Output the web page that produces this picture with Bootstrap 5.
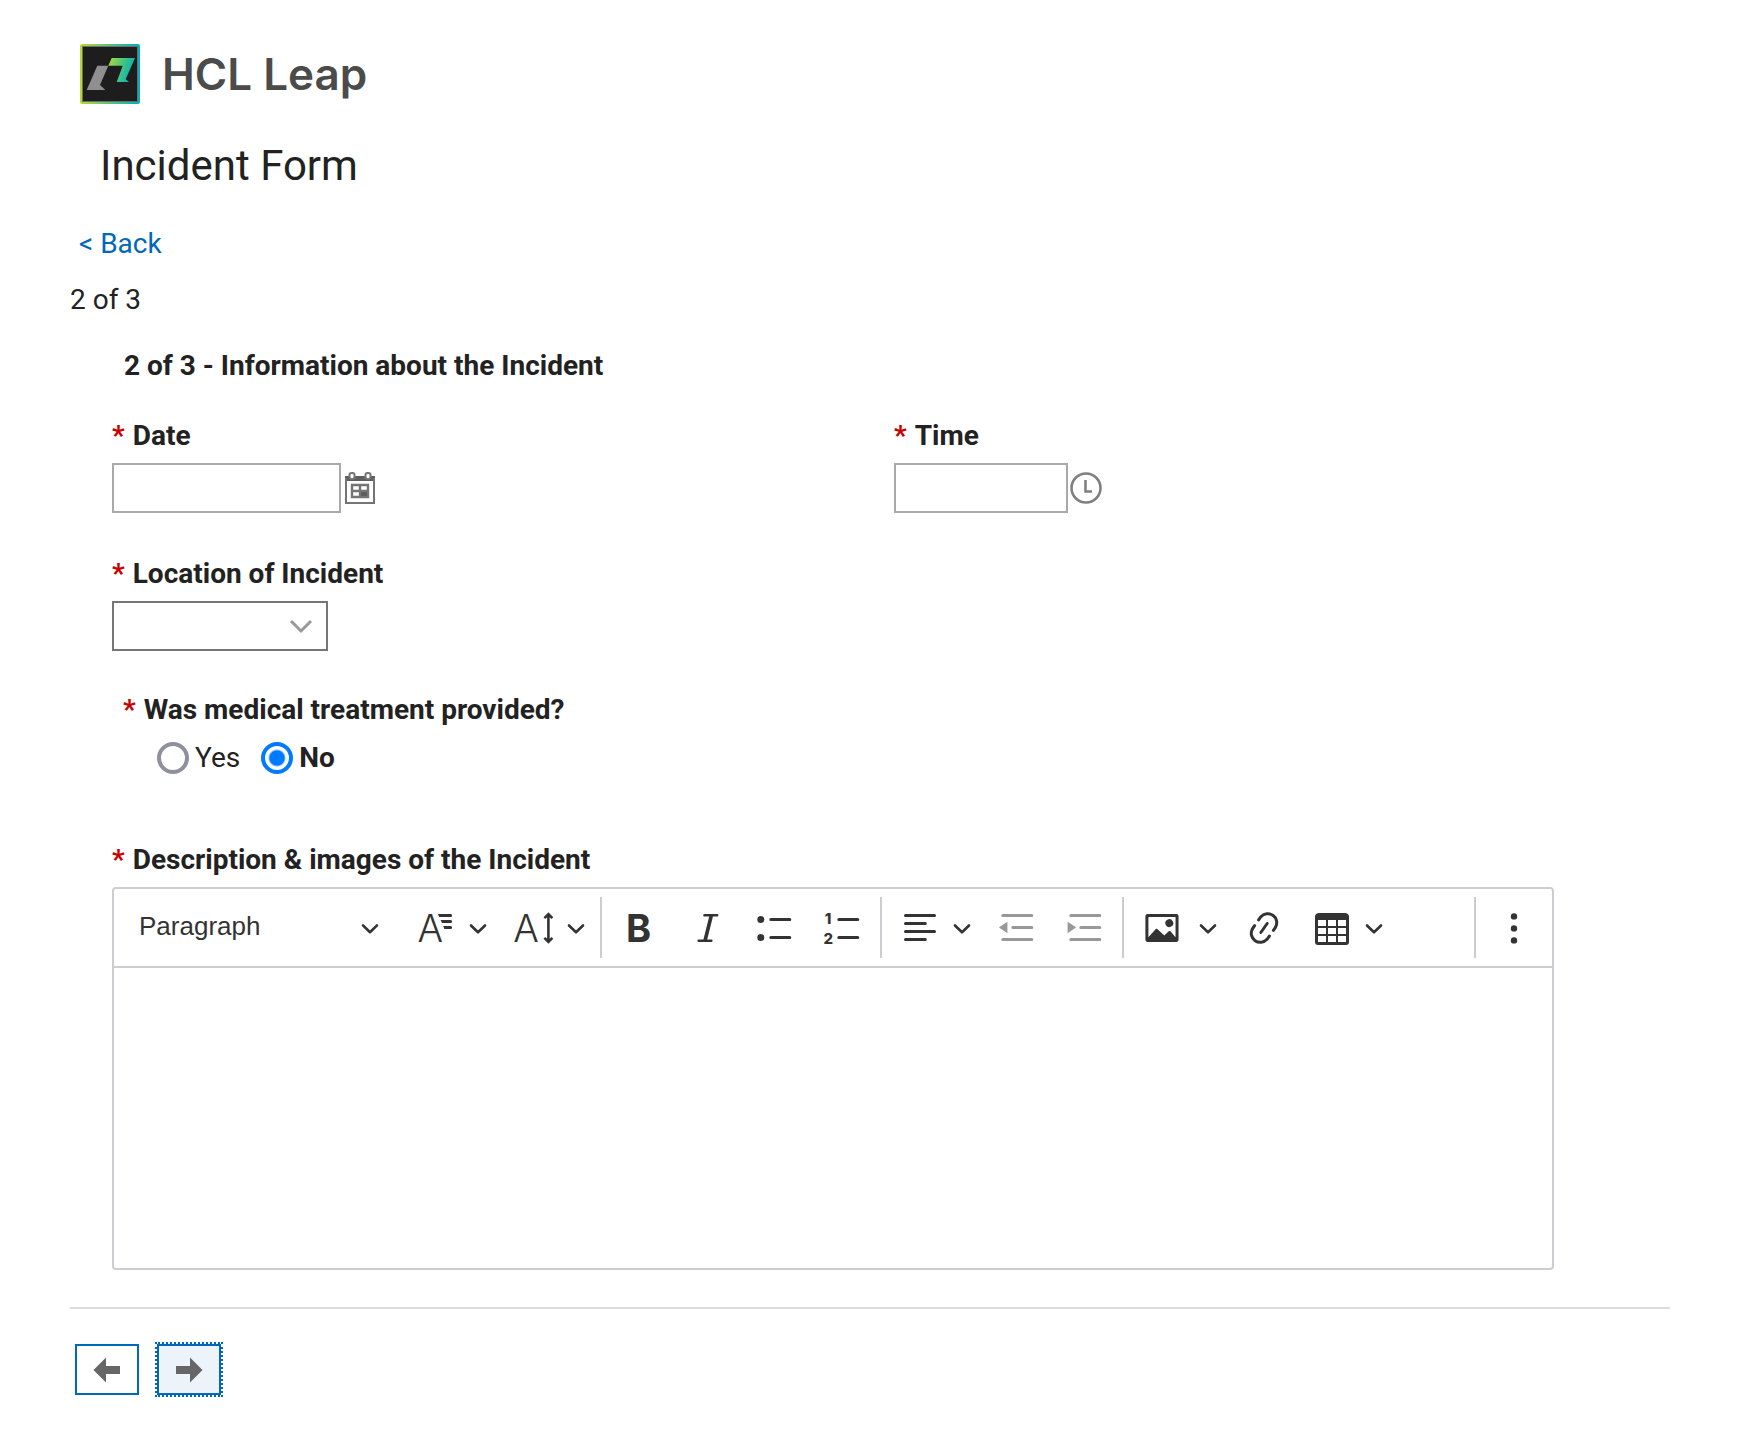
<!DOCTYPE html>
<html lang="en">
<head>
<meta charset="utf-8">
<meta name="viewport" content="width=device-width, initial-scale=1">
<title>Incident Form</title>
<link href="https://cdn.jsdelivr.net/npm/bootstrap@5.3.0/dist/css/bootstrap.min.css" rel="stylesheet">
<style>
  body { font-family: Roboto, sans-serif; font-size: 28px; line-height: 32px; color: #222; background: #fff; }
  .page { padding: 44px 68px 48px 70px; }
  .brand { padding-left: 10px; gap: 22px; }
  .brand-name { font-family: Inter, sans-serif; font-size: 44px; line-height: 60px; font-weight: 600; color: #4b4b4b; }
  .form-title { font-size: 42px; line-height: 48px; font-weight: 400; margin: 38px 0 38px 30px; }
  .back-link { color: #0068b8; padding-left: 9px; }
  .page-count { margin-top: 24px; }
  .section-title { font-size: 28px; line-height: 32px; font-weight: 700; margin: 34px 0 38px 12px; }
  .fields { padding-left: 42px; }
  .field-label { display: block; font-size: 28px; line-height: 32px; font-weight: 700; margin: 0 0 11px; padding: 0; float: none; width: auto; }
  .req { color: #c80000; margin-right: 8px; }
  .form-control, .form-select { border: 2px solid #a9a9a9; border-radius: 0; font-size: 28px; height: 50px; padding: 0 12px; }
  .date-box { width: 229px; }
  .time-box { width: 174px; }
  .location-box { width: 216px; border-color: #767676; background-position: right 12px center; background-size: 26px 26px;
    background-image: url("data:image/svg+xml,%3Csvg xmlns='http://www.w3.org/2000/svg' viewBox='0 0 26 26'%3E%3Cpath d='M3 8l10 10L23 8' fill='none' stroke='%23999' stroke-width='3'/%3E%3C/svg%3E"); }
  .icon-btn { border: 0; background: none; padding: 0; line-height: 0; }
  .time-picker { gap: 2px; }
  .second-row { margin-top: 45px; }
  .medical { margin: 43px 0 70px 11px; }
  .medical .field-label { margin-bottom: 16px; }
  .choices { gap: 21px; padding-left: 34px; }
  .choice { display: flex; align-items: center; gap: 6px; }
  .choice input { appearance: none; width: 32px; height: 32px; margin: 0; border: 4px solid #8f8f9d; border-radius: 50%; background: #fff; }
  .choice input:checked { border-color: #007bff; background: radial-gradient(circle, #007bff 7px, #fff 9px); }
  .choice input:checked + label { font-weight: 700; }
  .editor { margin-right: 122px; border: 2px solid #ccccd1; border-radius: 4px; }
  .tools { height: 79px; padding: 0 4px 0 8px; border-bottom: 2px solid #ccccd1; }
  .tool { border: 0; background: none; color: #333; padding: 0 14px; height: 64px; display: flex; align-items: center; flex: none; }
  .tool:disabled { opacity: .5; }
  .tool.drops { gap: 12px; padding-right: 12px; }
  .tool.drops.picture { gap: 16px; }
  .ico { width: 40px; height: 40px; fill: currentColor; display: block; overflow: visible; }
  .ico text { font-family: Inter, sans-serif; }
  .chev { width: 20px; height: 20px; fill: none; stroke: currentColor; stroke-width: 2; stroke-linecap: round; stroke-linejoin: round; }
  .para-select { appearance: none; border: 0; width: 280px; height: 64px; flex: none; padding: 0 60px 4px 17px; color: #333;
    font-family: "Liberation Sans", Arial, sans-serif; font-size: 26px; line-height: 32px;
    background: url("data:image/svg+xml,%3Csvg xmlns='http://www.w3.org/2000/svg' viewBox='0 0 10 10'%3E%3Cpath d='M1.5 3.7L5 7.1l3.500-3.400' fill='none' stroke='%23333' stroke-width='1.300' stroke-linecap='round' stroke-linejoin='round'/%3E%3C/svg%3E") right 22px center / 20px 20px no-repeat; }
  .divide { width: 2px; height: 61px; background: #ccccd1; margin: 0 4px 0 2px; flex: none; }
  .editor-area { display: block; width: 100%; height: 300px; border: 0; outline: 0; resize: none; padding: 16px; border-radius: 4px; }
  .page-rule { border: 0; border-top: 2px solid #dcdcde; opacity: 1; margin: 37px 6px 35px 0; }
  .pager { gap: 18px; padding-left: 5px; }
  .page-btn { width: 64px; height: 51px; border: 2px solid #0068b8; border-radius: 0; background: #fff; padding: 0; display: flex; align-items: center; justify-content: center; }
  .page-btn.current { background: #ecf3fb; outline: 2px dotted #0068b8; }
</style>
</head>
<body>
<svg class="d-none" aria-hidden="true">
  <symbol id="chev" viewBox="0 0 20 20"><path d="M3 7.500l7 6.800 7-6.800" stroke-width="2.600"/></symbol>
</svg>
<main class="page">
  <header class="brand d-flex align-items-center">
    <svg width="60" height="60" viewBox="0 0 60 60" aria-hidden="true">
      <defs>
        <linearGradient id="edge"><stop offset="0" stop-color="#bfd730"/><stop offset=".5" stop-color="#5cc080"/><stop offset="1" stop-color="#00adc0"/></linearGradient>
        <linearGradient id="leaf" x1="0" y1="0" x2="1" y2=".3"><stop offset="0" stop-color="#b4d936"/><stop offset=".5" stop-color="#4fc878"/><stop offset="1" stop-color="#08b0b8"/></linearGradient>
      </defs>
      <rect width="60" height="60" rx="2" fill="url(#edge)"/>
      <rect x="2.500" y="2.500" width="55" height="55" fill="#1d1d1d" stroke="#66706c" stroke-width="1"/>
      <path d="M17.300 21.700h11L20 41l5.300 5H6.700z" fill="#8f8f8f"/>
      <path d="M31.700 14H55l-9.300 21.300L49 38H36.700l6-16.300H28.300z" fill="url(#leaf)"/>
    </svg>
    <span class="brand-name">HCL Leap</span>
  </header>

  <h1 class="form-title">Incident Form</h1>
  <nav><a class="back-link d-block text-decoration-none" href="#">&lt; Back</a></nav>
  <div class="page-count">2 of 3</div>

  <form class="m-0" onsubmit="return false">
    <div class="fields">
      <h2 class="section-title">2 of 3 - Information about the Incident</h2>

      <div class="row gx-0">
        <div class="col-6">
          <label class="field-label" for="date"><span class="req">*</span>Date</label>
          <div class="d-flex align-items-center gap-1">
            <input class="form-control date-box" id="date" type="text">
            <button class="icon-btn" type="button" aria-label="Choose date">
              <svg width="30" height="32" viewBox="0 0 30 32" fill="none" stroke="#757575" stroke-width="2">
                <path d="M0 4h30v5H0z" fill="#5f5f5f" stroke="none"/>
                <path d="M1 6v25h28V6"/>
                <rect x="4.500" y="1" width="5" height="6" rx="2" fill="#fff"/>
                <rect x="20.500" y="1" width="5" height="6" rx="2" fill="#fff"/>
                <path d="M7 13h16v12H7zM15 13v12M7 19h16" stroke-width="2.400"/>
                <path d="M15 19h8v6h-8z" fill="#5f5f5f"/>
              </svg>
            </button>
          </div>
        </div>
        <div class="col-6">
          <label class="field-label" for="time"><span class="req">*</span>Time</label>
          <div class="time-picker d-flex align-items-center">
            <input class="form-control time-box" id="time" type="text">
            <button class="icon-btn" type="button" aria-label="Choose time">
              <svg width="32" height="32" viewBox="0 0 32 32" fill="none" stroke="#808080" stroke-width="2.600">
                <circle cx="16" cy="16" r="14.500"/><path d="M15.500 8v11.500H22"/>
              </svg>
            </button>
          </div>
        </div>
      </div>

      <div class="second-row">
        <label class="field-label" for="location"><span class="req">*</span>Location of Incident</label>
        <select class="form-select location-box" id="location"><option selected></option></select>
      </div>

      <fieldset class="medical">
        <legend class="field-label"><span class="req">*</span>Was medical treatment provided?</legend>
        <div class="choices d-flex">
          <div class="choice"><input type="radio" name="medical" id="medYes"><label for="medYes">Yes</label></div>
          <div class="choice"><input type="radio" name="medical" id="medNo" checked><label for="medNo">No</label></div>
        </div>
      </fieldset>

      <label class="field-label" for="description"><span class="req">*</span>Description &amp; images of the Incident</label>
      <div class="editor">
        <div class="tools d-flex align-items-center" role="toolbar" aria-label="Editor toolbar">
          <select class="para-select" aria-label="Heading"><option>Paragraph</option></select>
          <button class="tool drops" type="button" aria-label="Font family">
            <svg class="ico" viewBox="0 0 20 20"><text x="0.700" y="17" font-weight="300" font-size="19">A</text><path d="M11 3h6.300a.75.75 0 0 1 0 1.500h-5.700zM12.300 6h5a.75.75 0 0 1 0 1.500H13zM13.600 9h3.700a.75.75 0 0 1 0 1.500h-3.100z"/></svg>
            <svg class="chev"><use href="#chev"/></svg>
          </button>
          <button class="tool drops" type="button" aria-label="Font size">
            <svg class="ico" viewBox="0 0 20 20"><text x="-0.400" y="17" font-weight="300" font-size="19">A</text><path d="M17.200 3.500v13M15.200 5.100l2-2 2 2M15.200 14.900l2 2 2-2" fill="none" stroke="currentColor" stroke-width="1.300"/></svg>
            <svg class="chev"><use href="#chev"/></svg>
          </button>
          <span class="divide"></span>
          <button class="tool" type="button" aria-label="Bold">
            <svg class="ico" viewBox="0 0 20 20"><text x="3" y="17" font-weight="700" font-size="19">B</text></svg>
          </button>
          <button class="tool" type="button" aria-label="Italic">
            <svg class="ico" viewBox="0 0 20 20" fill="none"><path d="M8.200 3.600h6.400M5.300 16.400h6.400" stroke="currentColor" stroke-width="1.200" stroke-linecap="round"/><path d="M11.700 3.600L8.500 16.400" stroke="currentColor" stroke-width="1.800"/></svg>
          </button>
          <button class="tool" type="button" aria-label="Bulleted list">
            <svg class="ico" viewBox="0 0 20 20"><circle cx="2.400" cy="5.750" r="1.750"/><circle cx="2.400" cy="14.750" r="1.750"/><path d="M7.400 5.750h9.500M7.400 14.750h9.500" stroke="currentColor" stroke-width="1.500" stroke-linecap="round"/></svg>
          </button>
          <button class="tool" type="button" aria-label="Numbered list">
            <svg class="ico" viewBox="0 0 20 20"><text x="0.400" y="8" font-weight="800" font-size="7.500">1</text><text x="-0.200" y="18" font-weight="800" font-size="7.500">2</text><path d="M7.400 5.750h9.500M7.400 14.750h9.500" stroke="currentColor" stroke-width="1.500" stroke-linecap="round"/></svg>
          </button>
          <span class="divide"></span>
          <button class="tool drops" type="button" aria-label="Text alignment">
            <svg class="ico" viewBox="0 0 20 20"><path d="M2.750 3.750h14.500M2.750 7.750h9.900M2.750 11.750h14.500M2.750 15.750h9.900" stroke="currentColor" stroke-width="1.500" stroke-linecap="round"/></svg>
            <svg class="chev"><use href="#chev"/></svg>
          </button>
          <button class="tool" type="button" aria-label="Decrease indent" disabled>
            <svg class="ico" viewBox="0 0 20 20"><path d="M2.400 3.750h14.500M7.400 9.750h9.500M2.400 15.750h14.500" stroke="currentColor" stroke-width="1.500" stroke-linecap="round"/><path d="M4.700 6.900v5.700L.7 9.900q-.3-.2 0-.4z"/></svg>
          </button>
          <button class="tool" type="button" aria-label="Increase indent" disabled>
            <svg class="ico" viewBox="0 0 20 20"><path d="M2.400 3.750h14.500M7.400 9.750h9.500M2.400 15.750h14.500" stroke="currentColor" stroke-width="1.500" stroke-linecap="round"/><path d="M.8 6.900v5.700l4-2.700q.3-.2 0-.4z"/></svg>
          </button>
          <span class="divide"></span>
          <button class="tool drops picture" type="button" aria-label="Insert image">
            <svg class="ico" viewBox="0 0 20 20"><path d="M6.910 10.540c.26-.23.64-.21.88.03l3.360 3.140 2.230-2.060a.64.64 0 0 1 .87 0l2.520 2.970V4.500H3.200v10.120l3.710-4.080zm10.270-7.510c.6 0 1.090.47 1.090 1.050v11.840c0 .59-.49 1.060-1.090 1.060H2.790c-.6 0-1.090-.47-1.090-1.060V4.080c0-.58.49-1.050 1.100-1.050h14.380zm-5.220 5.560a1.960 1.960 0 1 1 3.400-1.960 1.960 1.960 0 0 1-3.400 1.960z"/></svg>
            <svg class="chev"><use href="#chev"/></svg>
          </button>
          <button class="tool" type="button" aria-label="Link">
            <svg class="ico" viewBox="0 0 20 20"><path d="m11.077 15 .991-1.416a.75.75 0 1 1 1.229.86l-1.148 1.640a.748.748 0 0 1-.217.206 5.251 5.251 0 0 1-8.503-5.955.741.741 0 0 1 .12-.274l1.147-1.639a.75.75 0 1 1 1.228.86L4.933 10.700l.006.003a3.750 3.750 0 0 0 6.132 4.294l.006.004zm5.494-5.335a.748.748 0 0 1-.12.274l-1.147 1.639a.75.75 0 1 1-1.228-.86l.86-1.230a3.750 3.750 0 0 0-6.144-4.301l-.86 1.229a.75.75 0 0 1-1.229-.86l1.148-1.640a.748.748 0 0 1 .217-.206 5.251 5.251 0 0 1 8.503 5.955zm-4.563-2.532a.75.75 0 0 1 .184 1.045l-3.155 4.505a.75.75 0 1 1-1.229-.86l3.155-4.506a.75.75 0 0 1 1.045-.184z"/></svg>
          </button>
          <button class="tool drops" type="button" aria-label="Insert table">
            <svg class="ico" viewBox="0 0 20 20"><path d="M3 6v3h4V6H3zm0 4v3h4v-3H3zm0 4v3h4v-3H3zm5 3h4v-3H8v3zm5 0h4v-3h-4v3zm4-4v-3h-4v3h4zm0-4V6h-4v3h4zm1.500 8a1.500 1.500 0 0 1-1.500 1.500H3A1.500 1.500 0 0 1 1.500 17V4c.222-.863 1.068-1.500 2-1.500h13c.932 0 1.778.637 2 1.500v13zM12 13v-3H8v3h4zm0-4V6H8v3h4z"/></svg>
            <svg class="chev"><use href="#chev"/></svg>
          </button>
          <span class="divide ms-auto"></span>
          <button class="tool" type="button" aria-label="Show more items">
            <svg class="ico" viewBox="0 0 20 20"><circle cx="10" cy="4.200" r="1.600"/><circle cx="10" cy="10.200" r="1.600"/><circle cx="10" cy="16.200" r="1.600"/></svg>
          </button>
        </div>
        <textarea class="editor-area" id="description"></textarea>
      </div>
    </div>

    <hr class="page-rule">
    <div class="pager d-flex">
      <button class="page-btn" type="button" aria-label="Previous page">
        <svg width="28" height="26" viewBox="0 0 28 26"><path d="M.5 13L13 .5V9h14v8H13v8.500z" fill="#666"/></svg>
      </button>
      <button class="page-btn current" type="button" aria-label="Next page">
        <svg width="28" height="26" viewBox="0 0 28 26"><path d="M27.500 13L15 .5V9H1v8h14v8.500z" fill="#666"/></svg>
      </button>
    </div>
  </form>
</main>
<script src="https://cdn.jsdelivr.net/npm/bootstrap@5.3.0/dist/js/bootstrap.bundle.min.js"></script>
</body>
</html>
